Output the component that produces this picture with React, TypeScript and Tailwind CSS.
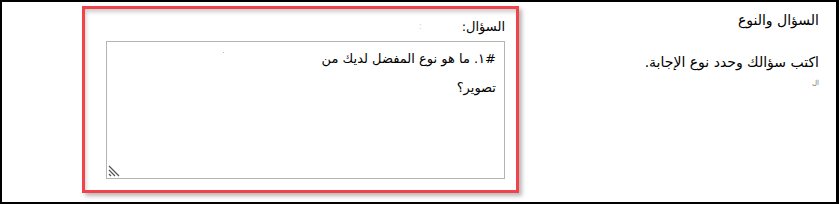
export default function App() {
  return (
    <div
      className="w-[839px] h-[204px] bg-white border-t-2 border-l-2 border-b-2 border-r-[3px] border-black flex text-black"
      style={{ fontFamily: '"DejaVu Sans", "Liberation Sans", sans-serif' }}
    >
      <div className="pl-[80px] pt-[4px]">
        <div className="w-[437px] h-[187px] border-[3px] border-[#f2434a] bg-white shadow-[inset_2px_4px_4px_-1px_rgba(0,0,0,0.2),3px_3px_4px_rgba(0,0,0,0.28)] pl-[21px] pr-[11px]">
          <div className="mt-[9px] h-[18px] flex justify-end items-center gap-[40px]">
            <span className="text-[9px] text-[#c8d4de]">:</span>
            <span dir="rtl" className="text-[13px] leading-[18px]">
              السؤال:
            </span>
          </div>
          <div
            dir="rtl"
            className="relative mt-[5px] h-[138px] border border-[#b4b4b4] pr-[8px] pt-[2px] text-[13px] leading-[29px]"
          >
            <div>#١. ما هو نوع المفضل لديك من</div>
            <div>تصوير؟</div>
            <span className="absolute left-[116px] top-[10px] w-px h-px bg-[#8cc8f0]" />
            <svg
              className="absolute left-[1px] bottom-[1px]"
              width="12"
              height="12"
              viewBox="0 0 12 12"
              stroke="#555"
              strokeWidth="1.3"
            >
              <line x1="1" y1="1" x2="11" y2="11" />
              <line x1="1" y1="5" x2="7" y2="11" />
              <line x1="1" y1="9" x2="3" y2="11" />
            </svg>
          </div>
        </div>
      </div>
      <div dir="rtl" className="flex-1 pr-[17px] pt-[8px]">
        <div className="text-[14px] leading-[20px]">السؤال والنوع</div>
        <div className="mt-[22px] text-[14px] leading-[20px]">اكتب سؤالك وحدد نوع الإجابة.</div>
        <div className="mt-[6px] text-[7px] leading-[10px] text-[#777]">ال</div>
      </div>
    </div>
  );
}
